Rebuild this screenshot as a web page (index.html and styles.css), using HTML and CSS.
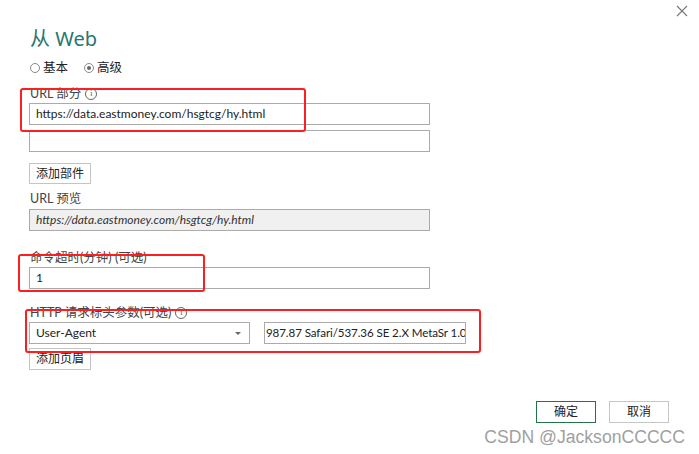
FILE: index.html
```html
<!DOCTYPE html>
<html lang="zh">
<head>
<meta charset="utf-8">
<link rel="stylesheet" href="styles.css">
</head>
<body>
<div class="dialog">
  <div class="close" aria-label="关闭">
    <svg width="12" height="12" viewBox="0 0 12 12"><path d="M1 1L11 11M11 1L1 11" stroke="#777" stroke-width="1.1" fill="none"/></svg>
  </div>
  <h1 class="title">从 Web</h1>
  <div class="radios">
    <label class="radio"><span class="dot"></span>基本</label>
    <label class="radio"><span class="dot checked"></span>高级</label>
  </div>

  <div class="label l-url">URL 部分 <span class="info">i</span></div>
  <div class="input">https://data.eastmoney.com/hsgtcg/hy.html</div>
  <div class="input gap6"></div>
  <div class="btn btn-add">添加部件</div>

  <div class="label l-preview">URL 预览</div>
  <div class="input preview">https://data.eastmoney.com/hsgtcg/hy.html</div>

  <div class="label l-timeout">命令超时(分钟) (可选)</div>
  <div class="input">1</div>

  <div class="label l-http">HTTP 请求标头参数(可选) <span class="info">i</span></div>
  <div class="header-row">
    <div class="select">User-Agent<span class="caret"></span></div>
    <div class="input value"><span>987.87 Safari/537.36 SE 2.X MetaSr 1.0</span></div>
  </div>
  <div class="btn btn-add2">添加页眉</div>

  <div class="footer">
    <div class="btn ok">确定</div>
    <div class="btn cancel">取消</div>
  </div>

  <div class="mark m1"></div>
  <div class="mark m2"></div>
  <div class="mark m3"></div>
  <div class="watermark">CSDN @JacksonCCCCC</div>
</div>
</body>
</html>
```
FILE: styles.css
```css
html, body {
  margin: 0;
  padding: 0;
  background: #fff;
}
body {
  width: 699px;
  height: 454px;
  overflow: hidden;
  font-family: "Lato", "Noto Sans CJK SC", sans-serif;
  font-size: 12px;
  color: #333;
}
.dialog {
  position: relative;
  width: 699px;
  height: 454px;
  box-sizing: border-box;
  padding: 26px 0 0 29px;
}
.close {
  position: absolute;
  top: 5px;
  left: 676px;
  width: 12px;
  height: 12px;
}
.close svg { display: block; }
.title {
  margin: 0 0 0 1px;
  font-size: 20px;
  font-weight: normal;
  line-height: 26px;
  height: 26px;
  color: #2a7670;
  font-family: "Noto Sans", "Noto Sans CJK SC", sans-serif;
}
.radios {
  display: flex;
  gap: 16px;
  margin: 8px 0 0 1px;
  height: 16px;
  line-height: 16px;
  font-size: 12.5px;
}
.radio {
  display: flex;
  align-items: center;
  gap: 3px;
  color: #222;
}
.dot {
  width: 8px;
  height: 8px;
  border: 1px solid #888;
  border-radius: 50%;
  position: relative;
  box-sizing: content-box;
}
.dot.checked::after {
  content: "";
  position: absolute;
  left: 2px;
  top: 2px;
  width: 4px;
  height: 4px;
  border-radius: 50%;
  background: #666;
}
.label {
  margin: 0 0 1px 1px;
  height: 16px;
  line-height: 16px;
  display: flex;
  align-items: center;
  gap: 4px;
  color: #444;
  font-size: 12.5px;
}
.l-url { margin-top: 10px; }
.info {
  width: 10px;
  height: 10px;
  border: 1px solid #666;
  border-radius: 50%;
  font-size: 8px;
  line-height: 10px;
  text-align: center;
  color: #555;
  font-family: "Liberation Serif", serif;
}
.input {
  width: 401px;
  height: 22px;
  box-sizing: border-box;
  border: 1px solid #ababab;
  padding: 0 6px;
  line-height: 20px;
  color: #222;
  background: #fff;
  white-space: nowrap;
  overflow: hidden;
}
.gap6 { margin-top: 5px; }
.btn {
  box-sizing: border-box;
  height: 21px;
  width: 62px;
  border: 1px solid #c4c4c4;
  line-height: 19px;
  text-align: center;
  color: #222;
  background: #fff;
}
.btn-add { margin-top: 11px; }
.l-preview { margin-top: 7px; margin-bottom: 2px; }
.preview {
  background: #f0f0f0;
  font-style: italic;
  color: #333;
}
.l-timeout { margin-top: 19px; }
.l-http { margin-top: 16px; }
.header-row {
  display: flex;
  gap: 14px;
}
.select {
  width: 221px;
  height: 22px;
  box-sizing: border-box;
  border: 1px solid #ababab;
  padding: 0 6px;
  line-height: 20px;
  position: relative;
  color: #222;
}
.caret {
  position: absolute;
  right: 8px;
  top: 9px;
  border-left: 3px solid transparent;
  border-right: 3px solid transparent;
  border-top: 3px solid #666;
}
.value {
  width: 202px;
  padding: 0 1px 0 1px;
  font-size: 11.6px;
  letter-spacing: -0.1px;
}
.btn-add2 { margin-top: 4px; height: 22px; line-height: 20px; }
.footer {
  display: flex;
  gap: 13px;
  margin: 31px 0 0 507px;
}
.ok, .cancel {
  width: 60px;
  height: 22px;
  line-height: 20px;
}
.ok { border: 1px solid #217346; }
.cancel { border: 1px solid #c6c6c6; }
.mark {
  position: absolute;
  border: 2.5px solid #fd1f1f;
  border-radius: 3px;
  box-sizing: border-box;
}
.m1 { left: 20px; top: 88px; width: 286px; height: 44px; }
.m2 { left: 18px; top: 254px; width: 187px; height: 38px; }
.m3 { left: 25px; top: 309px; width: 456px; height: 44px; }
.watermark {
  position: absolute;
  right: 14px;
  top: 427px;
  font-family: "Liberation Sans", sans-serif;
  font-size: 17.6px;
  color: #a0a0a0;
}
```
